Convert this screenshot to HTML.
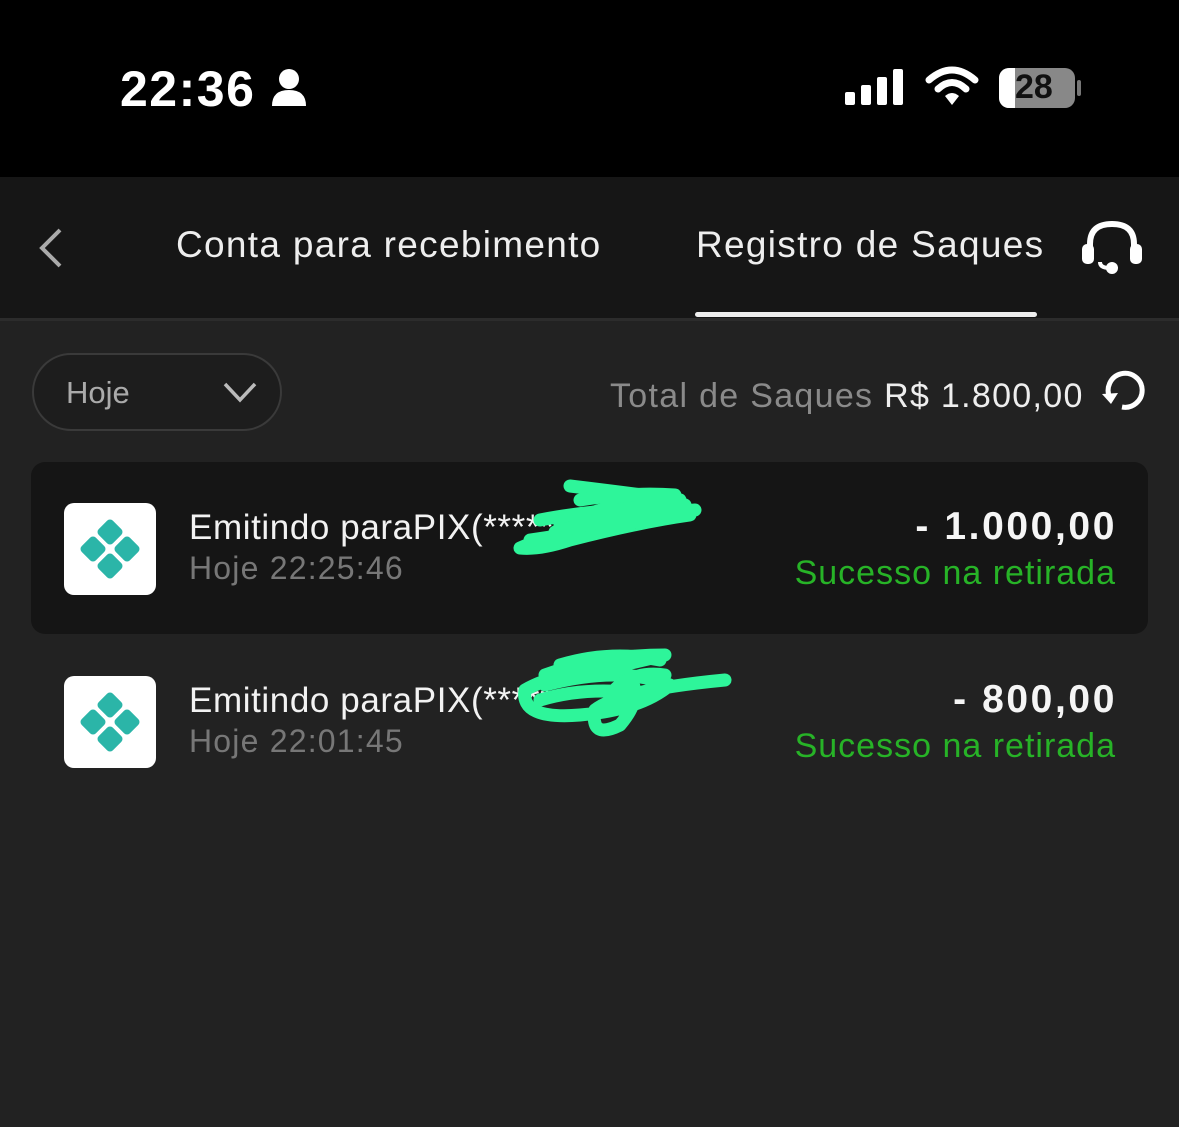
<!DOCTYPE html>
<html><head><meta charset="utf-8"><style>
body{margin:0;width:1179px;height:1127px;background:#222;font-family:"Liberation Sans",sans-serif;position:relative;overflow:hidden}
.abs{position:absolute}
.t{white-space:nowrap}
</style></head><body>
<div class="abs" style="left:0;top:0;width:1179px;height:177px;background:#000"></div>
<div class="abs t" style="left:120px;top:60px;color:#fff;font-size:50px;font-weight:bold;letter-spacing:1.5px">22:36</div>
<svg class="abs" style="left:270px;top:68px" width="38" height="40"><circle cx="19" cy="11" r="10" fill="#fff"/><path d="M2 38 Q2 22 19 22 Q36 22 36 38 Z" fill="#fff"/></svg>
<svg class="abs" style="left:845px;top:68px" width="60" height="38"><rect x="0" y="24" width="10" height="13" rx="2" fill="#fff"/><rect x="16" y="17" width="10" height="20" rx="2" fill="#fff"/><rect x="32" y="9" width="10" height="28" rx="2" fill="#fff"/><rect x="48" y="1" width="10" height="36" rx="2" fill="#fff"/></svg>
<svg class="abs" style="left:925px;top:66px" width="54" height="42"><path d="M4 14 Q27 -6 50 14" stroke="#fff" stroke-width="7" fill="none" stroke-linecap="round"/><path d="M13 23 Q27 10 41 23" stroke="#fff" stroke-width="7" fill="none" stroke-linecap="round"/><path d="M20 30 L27 39 L34 30 Q27 24 20 30Z" fill="#fff"/></svg>
<div class="abs" style="left:999px;top:68px;width:76px;height:40px;border-radius:10px;background:#888;overflow:hidden"><div style="width:16px;height:40px;background:#fff"></div></div>
<div class="abs" style="left:1077px;top:80px;width:4px;height:16px;border-radius:2px;background:#777"></div>
<div class="abs t" style="left:1015px;top:68px;font-size:34px;font-weight:bold;color:#111">28</div>

<div class="abs" style="left:0;top:177px;width:1179px;height:141px;background:#161616"></div>
<div class="abs" style="left:0;top:318px;width:1179px;height:3px;background:#2c2c2c"></div>
<svg class="abs" style="left:36px;top:226px" width="30" height="44"><path d="M24 4 L6 22 L24 40" stroke="#aaa" stroke-width="4" fill="none"/></svg>
<div class="abs t" style="left:176px;top:224px;color:#eee;font-size:37px;letter-spacing:1.3px">Conta para recebimento</div>
<div class="abs t" style="left:696px;top:224px;color:#eee;font-size:37px;letter-spacing:1.3px">Registro de Saques</div>
<div class="abs" style="left:695px;top:312px;width:342px;height:5px;border-radius:3px;background:#eee"></div>
<svg class="abs" style="left:1080px;top:218px" width="64" height="60"><path d="M10 36 V26 Q10 6 32 6 Q54 6 54 26 V36" stroke="#fff" stroke-width="6" fill="none"/><rect x="2" y="26" width="12" height="20" rx="5" fill="#fff"/><rect x="50" y="26" width="12" height="20" rx="5" fill="#fff"/><path d="M20 44 Q20 50 30 50" stroke="#fff" stroke-width="4" fill="none"/><circle cx="32" cy="50" r="6" fill="#fff"/></svg>

<div class="abs" style="left:32px;top:353px;width:246px;height:74px;border:2px solid #3a3a3a;border-radius:40px;background:#1d1d1d"></div>
<div class="abs t" style="left:66px;top:375px;color:#aaa;font-size:31px">Hoje</div>
<svg class="abs" style="left:222px;top:380px" width="36" height="24"><path d="M3 4 L18 20 L33 4" stroke="#bbb" stroke-width="3.5" fill="none"/></svg>
<div class="abs t" style="left:610px;top:377px;color:#8a8a8a;font-size:34px;letter-spacing:1.3px">Total de Saques <span style="color:#eee">R$ 1.800,00</span></div>
<svg class="abs" style="left:1098px;top:366px" width="50" height="50"><path d="M12 32 A17 17 0 1 1 24 41" stroke="#fff" stroke-width="5" fill="none"/><path d="M4 28 L13 38 L20 27Z" fill="#fff"/></svg>

<div class="abs" style="left:31px;top:462px;width:1117px;height:172px;border-radius:14px;background:#151515"></div>

<div class="abs" style="left:64px;top:503px;width:92px;height:92px;border-radius:10px;background:#fff"></div>
<svg class="abs" style="left:64px;top:503px" width="92" height="92"><g fill="#2bb5a8"><rect x="36" y="19" width="20" height="20" rx="4" transform="rotate(45 46 29)"/><rect x="19" y="36" width="20" height="20" rx="4" transform="rotate(45 29 46)"/><rect x="53" y="36" width="20" height="20" rx="4" transform="rotate(45 63 46)"/><rect x="36" y="53" width="20" height="20" rx="4" transform="rotate(45 46 63)"/></g></svg>
<div class="abs" style="left:64px;top:676px;width:92px;height:92px;border-radius:10px;background:#fff"></div>
<svg class="abs" style="left:64px;top:676px" width="92" height="92"><g fill="#2bb5a8"><rect x="36" y="19" width="20" height="20" rx="4" transform="rotate(45 46 29)"/><rect x="19" y="36" width="20" height="20" rx="4" transform="rotate(45 29 46)"/><rect x="53" y="36" width="20" height="20" rx="4" transform="rotate(45 63 46)"/><rect x="36" y="53" width="20" height="20" rx="4" transform="rotate(45 46 63)"/></g></svg>

<div class="abs t" style="left:189px;top:508px;color:#f2f2f2;font-size:35px;letter-spacing:0.6px">Emitindo paraPIX(*****  )</div>
<div class="abs t" style="left:189px;top:550px;color:#777;font-size:32px;letter-spacing:1.2px">Hoje 22:25:46</div>
<div class="abs t" style="left:189px;top:681px;color:#f2f2f2;font-size:35px;letter-spacing:0.6px">Emitindo paraPIX(*****</div>
<div class="abs t" style="left:189px;top:723px;color:#777;font-size:32px;letter-spacing:1.2px">Hoje 22:01:45</div>

<div class="abs t" style="right:62px;top:505px;color:#f5f5f5;font-size:39px;font-weight:bold;letter-spacing:2.6px">- 1.000,00</div>
<div class="abs t" style="right:63px;top:554px;color:#27b327;font-size:34px;letter-spacing:1px">Sucesso na retirada</div>
<div class="abs t" style="right:62px;top:678px;color:#f5f5f5;font-size:39px;font-weight:bold;letter-spacing:2.6px">- 800,00</div>
<div class="abs t" style="right:63px;top:727px;color:#27b327;font-size:34px;letter-spacing:1px">Sucesso na retirada</div>

<svg class="abs" style="left:500px;top:470px" width="240" height="300" fill="none" stroke="#2ef59a" stroke-width="13" stroke-linecap="round" stroke-linejoin="round">
<path d="M70 16 Q120 22 180 30 Q120 28 60 55 Q110 40 190 45 Q140 52 70 70 Q40 80 20 78 Q60 60 150 50 Q100 60 30 70"/>
<path d="M40 50 Q90 40 185 35 M80 30 Q130 22 175 25 M55 62 Q120 45 195 40"/>
<path d="M45 205 Q100 185 165 185 Q100 200 45 215 Q120 195 170 215 Q140 240 80 245 Q20 250 25 220 Q60 200 120 200 Q150 220 120 255 Q90 270 95 240 Q120 220 225 210"/>
<path d="M60 195 Q110 180 160 190 M40 230 Q90 215 150 225 M110 225 Q130 200 165 205"/>
</svg>
</body></html>
